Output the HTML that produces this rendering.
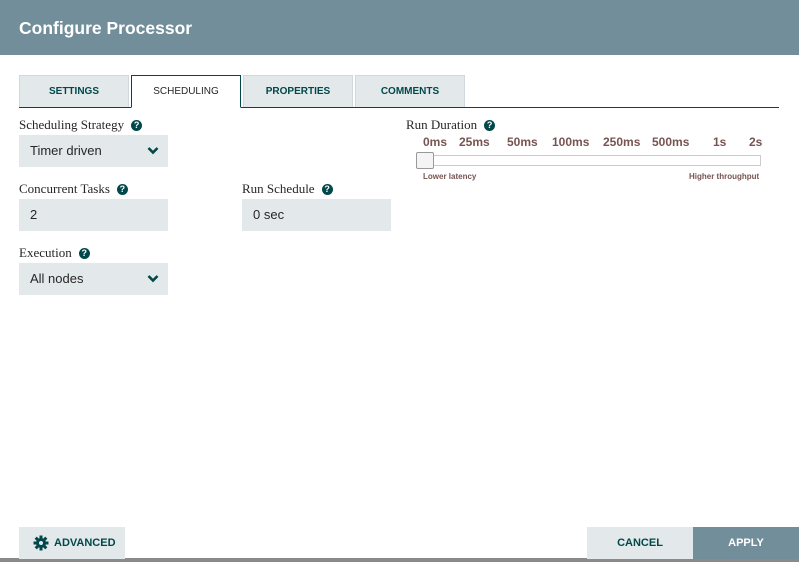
<!DOCTYPE html>
<html><head><style>
*{margin:0;padding:0;box-sizing:border-box}
body{width:799px;height:562px;position:relative;background:#fff;font-family:"Liberation Sans",sans-serif;overflow:hidden}
.hdr{position:absolute;left:0;top:0;width:799px;height:55px;background:#728e9b;color:#fff;font-weight:bold;font-size:17.5px;padding:18px 19px}
.tab{position:absolute;top:75px;height:33px;width:110px;background:#e3e8eb;border:1px solid #cfd8dc;border-bottom:none;font-size:10px;font-weight:bold;color:#004849;text-align:center;line-height:32px}
.tab.act{background:#fff;color:#262626;border:1px solid #004849;border-bottom:1px solid #fff;height:33px;z-index:2;font-weight:normal}
.line{position:absolute;left:19px;top:107px;width:760px;height:1px;background:#004849}
.lbl{position:absolute;font-family:"Liberation Serif",serif;font-size:13px;color:#262626}
.q{display:inline-block;width:11px;height:11px;border-radius:50%;background:#004849;color:#fff;font-family:"Liberation Sans";font-size:9px;font-weight:bold;text-align:center;line-height:11px;margin-left:7px;vertical-align:1px}
.inp{position:absolute;background:#e3e8eb;height:32px;width:149px;font-size:13px;color:#262626;padding:0 11px;line-height:32px}
.chev{position:absolute;right:9px;top:11px}
.tick{position:absolute;top:135px;font-size:12px;font-weight:bold;color:#775351}
.small{position:absolute;top:172px;font-size:8px;font-weight:bold;color:#775351}
</style></head><body>
<div class="hdr">Configure Processor</div>
<div class="tab" style="left:19px">SETTINGS</div>
<div class="tab act" style="left:131px">SCHEDULING</div>
<div class="tab" style="left:243px">PROPERTIES</div>
<div class="tab" style="left:355px">COMMENTS</div>
<div class="line"></div>

<div class="lbl" style="left:19px;top:117px">Scheduling Strategy<span class="q">?</span></div>
<div class="inp" style="left:19px;top:135px">Timer driven<svg class="chev" width="12" height="9" viewBox="0 0 12 9"><path d="M1.5 2 L6 6.5 L10.5 2" stroke="#004849" stroke-width="2.6" fill="none"/></svg></div>

<div class="lbl" style="left:19px;top:181px">Concurrent Tasks<span class="q">?</span></div>
<div class="inp" style="left:19px;top:199px">2</div>
<div class="lbl" style="left:242px;top:181px">Run Schedule<span class="q">?</span></div>
<div class="inp" style="left:242px;top:199px">0 sec</div>

<div class="lbl" style="left:19px;top:245px">Execution<span class="q">?</span></div>
<div class="inp" style="left:19px;top:263px">All nodes<svg class="chev" width="12" height="9" viewBox="0 0 12 9"><path d="M1.5 2 L6 6.5 L10.5 2" stroke="#004849" stroke-width="2.6" fill="none"/></svg></div>

<div class="lbl" style="left:406px;top:117px">Run Duration<span class="q">?</span></div>
<div class="tick" style="left:423px">0ms</div>
<div class="tick" style="left:459px">25ms</div>
<div class="tick" style="left:507px">50ms</div>
<div class="tick" style="left:552px">100ms</div>
<div class="tick" style="left:603px">250ms</div>
<div class="tick" style="left:652px">500ms</div>
<div class="tick" style="left:713px">1s</div>
<div class="tick" style="left:749px">2s</div>
<div style="position:absolute;left:417px;top:155px;width:344px;height:11px;border:1px solid #ccc;background:#fff"></div>
<div style="position:absolute;left:416px;top:152px;width:18px;height:17px;border:1px solid #999;background:#f4f4f4;border-radius:2px"></div>
<div class="small" style="left:423px">Lower latency</div>
<div class="small" style="left:689px">Higher throughput</div>

<div style="position:absolute;left:0;top:558px;width:799px;height:4px;background:#8a8a8a"></div>
<div style="position:absolute;left:19px;top:527px;width:106px;height:32px;background:#e3e8eb;font-size:11px;font-weight:bold;color:#004849;line-height:32px;padding-left:35px">ADVANCED</div>
<svg style="position:absolute;left:33px;top:535px" width="16" height="16" viewBox="0 0 16 16"><g fill="#004849"><circle cx="8" cy="8" r="5"/><rect x="6.5" y="0.5" width="3" height="15"/><rect x="0.5" y="6.5" width="15" height="3"/><rect x="6.5" y="0.5" width="3" height="15" transform="rotate(45 8 8)"/><rect x="6.5" y="0.5" width="3" height="15" transform="rotate(-45 8 8)"/></g><circle cx="8" cy="8" r="2" fill="#e3e8eb"/></svg>
<div style="position:absolute;left:587px;top:527px;width:106px;height:32px;background:#e3e8eb;font-size:11px;font-weight:bold;color:#004849;line-height:32px;text-align:center">CANCEL</div>
<div style="position:absolute;left:693px;top:527px;width:106px;height:32px;background:#728e9b;font-size:11px;font-weight:bold;color:#fff;line-height:32px;text-align:center">APPLY</div>
</body></html>
